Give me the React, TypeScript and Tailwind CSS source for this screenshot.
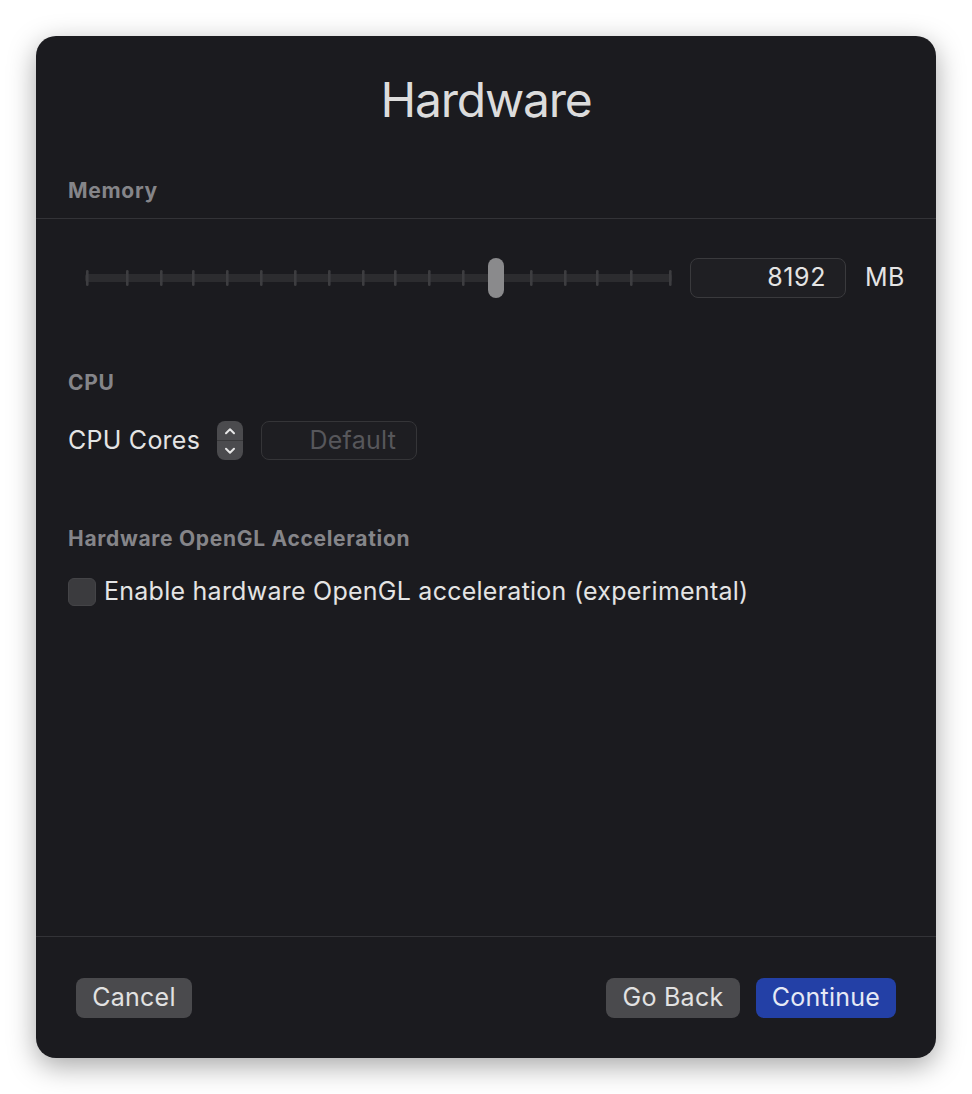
import React from "react";

const ticks = [1, 41, 75, 107, 141, 175, 209, 243, 277, 309, 343, 377, 411, 445, 479, 511, 545, 584];

function Slider() {
  return (
    <svg width="587" height="40" viewBox="0 0 587 40" className="block">
      <rect x="0" y="16" width="587" height="8" rx="2" fill="#2c2c2f" />
      {ticks.map((x) => (
        <rect key={x} x={x} y="12" width="2.6" height="16" rx="1.3" fill="#3d3d40" />
      ))}
      <rect x="403" y="0" width="16" height="40" rx="8" fill="#8a8a8c" />
    </svg>
  );
}

function Stepper() {
  return (
    <div className="w-[26px] h-[39px] rounded-[8px] bg-[#4b4b4e] flex flex-col overflow-hidden">
      <div className="flex-1 flex items-center justify-center border-b border-[#38383a]">
        <svg width="12" height="8" viewBox="0 0 12 8">
          <path d="M2 6.2 L6 2.2 L10 6.2" stroke="#e6e6e6" strokeWidth="2" fill="none" strokeLinecap="round" strokeLinejoin="round" />
        </svg>
      </div>
      <div className="flex-1 flex items-center justify-center">
        <svg width="12" height="8" viewBox="0 0 12 8">
          <path d="M2 1.8 L6 5.8 L10 1.8" stroke="#e6e6e6" strokeWidth="2" fill="none" strokeLinecap="round" strokeLinejoin="round" />
        </svg>
      </div>
    </div>
  );
}

export default function App() {
  return (
    <div
      className="w-[972px] h-[1094px] bg-white p-[36px]"
      style={{ fontFamily: "Inter, 'Noto Sans', sans-serif" }}
    >
      <div className="w-[900px] h-[1022px] rounded-[20px] bg-[#1b1b1f] shadow-[0_8px_28px_rgba(0,0,0,0.35)] flex flex-col text-[#dedede]">
        <div className="pt-[34px] h-[94px] text-center text-[48px] leading-[60px] tracking-[-1.2px] text-[#dcdcdc]">Hardware</div>

        <div className="mt-[49px] px-[32px] h-[24px] leading-[24px] text-[21px] tracking-[0.7px] font-bold text-[#858589]">Memory</div>
        <div className="mt-[15px] h-px bg-[#333337]" />

        <div className="mt-[39px] pl-[49px] flex items-center h-[40px]">
          <Slider />
          <div className="ml-[18px] w-[156px] h-[40px] rounded-[8px] border border-[#3a3a3d] bg-[#1f1f23] flex items-center justify-end pr-[19px] text-[25px] tracking-[0.6px] text-[#e4e4e4]">
            8192
          </div>
          <div className="ml-[19px] text-[25px] tracking-[0.3px] text-[#e4e4e4]">MB</div>
        </div>

        <div className="mt-[73px] px-[32px] h-[24px] leading-[24px] text-[21px] tracking-[0.7px] font-bold text-[#858589]">CPU</div>
        <div className="mt-[26px] px-[32px] flex items-center h-[39px]">
          <span className="text-[25px] tracking-[0.25px] text-[#e4e4e4] mr-[17px]">CPU Cores</span>
          <Stepper />
          <div className="ml-[18px] w-[156px] h-[39px] rounded-[8px] border border-[#353538] bg-[#1e1e22] flex items-center justify-end pr-[20px] text-[25px] tracking-[0.25px] text-[#57575b]">
            Default
          </div>
        </div>

        <div className="mt-[67px] px-[32px] h-[24px] leading-[24px] text-[21px] tracking-[0.7px] font-bold text-[#858589]">
          Hardware OpenGL Acceleration
        </div>
        <div className="mt-[27px] px-[32px] flex items-center h-[28px]">
          <div className="w-[28px] h-[28px] rounded-[6px] bg-[#3b3b3e] border border-[#444447]" />
          <span className="ml-[8px] text-[25px] tracking-[0.25px] text-[#e4e4e4]">Enable hardware OpenGL acceleration (experimental)</span>
        </div>

        <div className="flex-1" />
        <div className="h-px bg-[#333337]" />
        <div className="pt-[41px] pb-[40px] px-[40px] flex items-center">
          <button className="w-[116px] h-[40px] rounded-[8px] bg-[#4a4a4d] text-[25px] tracking-[0.25px] text-[#e2e2e2]">Cancel</button>
          <div className="flex-1" />
          <button className="w-[134px] h-[40px] rounded-[8px] bg-[#4a4a4d] text-[25px] tracking-[0.25px] text-[#e2e2e2]">Go Back</button>
          <button className="ml-[16px] w-[140px] h-[40px] rounded-[8px] bg-[#2340a6] text-[25px] tracking-[0.25px] text-[#e6e9f5]">Continue</button>
        </div>
      </div>
    </div>
  );
}
